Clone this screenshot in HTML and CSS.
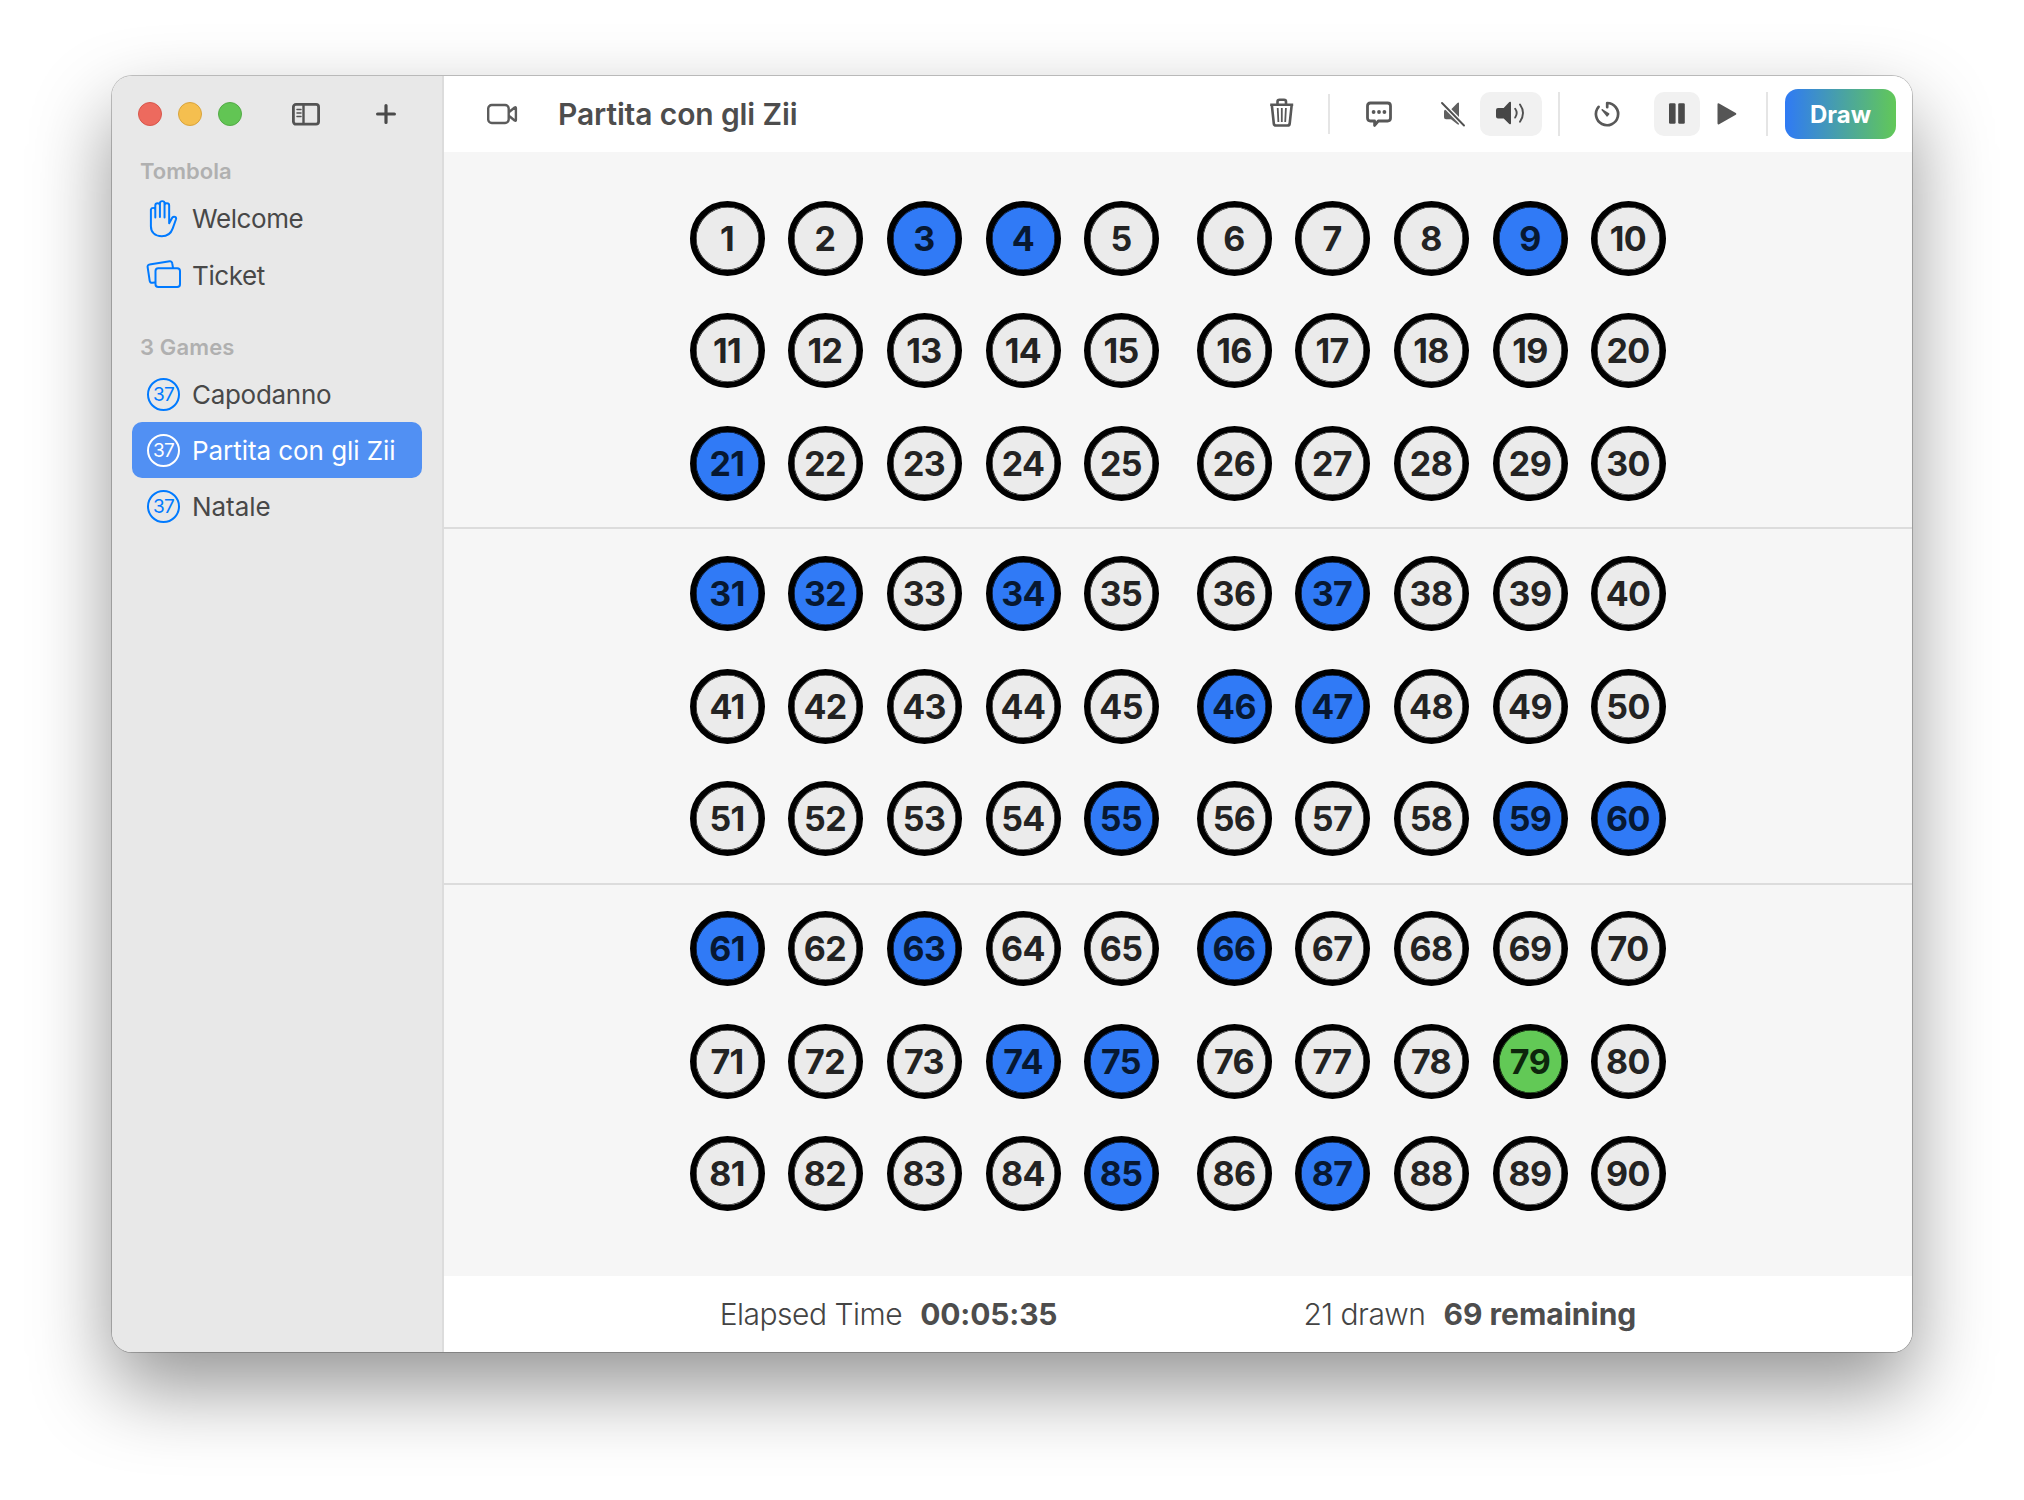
FILE: index.html
```html
<!DOCTYPE html>
<html lang="en">
<head>
<meta charset="utf-8">
<title>Tombola</title>
<link rel="stylesheet" href="styles.css">
</head>
<body>
<div class="window">
  <aside class="sidebar">
    <div class="titlebar">
      <span class="light red"></span><span class="light yellow"></span><span class="light green"></span>
      <svg class="ic-side" width="28" height="23" viewBox="0 0 28 23" fill="none" stroke="#535353"><rect x="1.4" y="1.4" width="25.2" height="19.8" rx="2.6" stroke-width="2.8"/><path d="M11.5 1v20.500" stroke-width="2.400"/><path d="M5 6.500h4M5 10h4M5 13.500h4" stroke-width="1.500" stroke-linecap="round"/></svg>
      <svg class="ic-plus" width="20" height="20" viewBox="0 0 20 20" stroke="#4a4a4a" stroke-width="3.200" stroke-linecap="round"><path d="M10 1.600v16.800M1.600 10h16.800"/></svg>
    </div>
    <h2 class="heading">Tombola</h2>
    <a class="item"><svg class="icon" width="36" height="36" viewBox="0 0 36 36" fill="none" stroke="#007aff" stroke-width="1.900" stroke-linecap="round" stroke-linejoin="round"><path transform="translate(-.3 -1) scale(1.05 1.03)" d="M5.900 20V9.200a2.200 2.200 0 0 1 4.200 0V17M10.100 17V5.400a2.200 2.200 0 0 1 4.400 0V16.500M14.500 16.500V3.300a2.200 2.200 0 0 1 4.400 0V16.500M18.900 17V5.400a2.200 2.200 0 0 1 4.400 0V22.500L26.200 17.200c1.600-2 4.300-.8 3.600 1.500L26.700 27.500C24.800 33 21.200 35.200 16.300 35.200 9.500 35.200 5.900 31 5.900 25.500V19"/></svg><span class="welcome">Welcome</span></a>
    <a class="item"><svg class="icon" width="36" height="36" viewBox="0 0 36 36" fill="none" stroke="#007aff" stroke-width="2" stroke-linecap="round" stroke-linejoin="round"><rect x="10.500" y="11.300" width="24.500" height="18.800" rx="2.800"/><path d="M28 10.800l-.8-4.600a2.200 2.200 0 0 0-2.500-1.900L4.500 7.400a2.200 2.200 0 0 0-1.900 2.500l2.100 14a2.200 2.200 0 0 0 2.500 1.900l2.700-.4"/></svg><span class="ticket">Ticket</span></a>
    <h2 class="heading games">3 Games</h2>
    <a class="item"><span class="badge">37</span><span class="name-tight">Capodanno</span></a>
    <a class="item selected"><span class="badge">37</span><span>Partita con gli Zii</span></a>
    <a class="item"><span class="badge">37</span><span>Natale</span></a>
  </aside>
  <main class="main">
    <header class="toolbar">
      <svg class="ic-video" width="32" height="22" viewBox="0 0 32 22" fill="none" stroke="#5c5c5c" stroke-width="2.400" stroke-linejoin="round"><rect x="2.200" y="2" width="20.500" height="18" rx="3.600"/><path d="M22.800 9.200l5.900-4.700q1.200-.8 1.200.6v11.800q0 1.400-1.200.6L22.800 12.800"/></svg>
      <h1 class="title">Partita con gli Zii</h1>
      <div class="tools">
        <svg class="ic-trash" width="26" height="30" viewBox="0 0 26 30" fill="none" stroke="#585858"><path d="M2.800 6.800L4.800 25.500q.2 2 2.200 2h11.500q2 0 2.200-2L22.700 6.800" stroke-width="2.600"/><path d="M1.200 6.700h23" stroke-width="2.600"/><path d="M8.500 6V3.800q0-2 2-2h4.500q2 0 2 2V6" stroke-width="2.600"/><path d="M8.700 10l.7 14M12.800 10v14M16.900 10l-.7 14" stroke-width="1.800"/></svg>
        <i class="rule short r1"></i>
        <svg class="ic-chat" width="28" height="28" viewBox="0 0 28 28"><path d="M5.400 3h17.200q2.900 0 2.900 2.900v12.200q0 2.900-2.900 2.900H13.300L9.600 25.400V21H5.400q-2.900 0-2.900-2.900V5.900Q2.500 3 5.400 3z" fill="none" stroke="#585858" stroke-width="2.800" stroke-linejoin="round"/><g fill="#585858"><circle cx="8.600" cy="12" r="1.900"/><circle cx="14" cy="12" r="1.900"/><circle cx="19.400" cy="12" r="1.900"/></g></svg>
        <svg class="ic-mute" width="26" height="26" viewBox="0 0 26 26"><path d="M19 2.500v20q0 2-1.600.8L11 18.300H6q-2 0-2-2V10.500q0-2 2-2h5L17.400 1.900Q19 .7 19 2.500z" fill="#606060"/><path d="M2.200 2.200l21.500 22" stroke="#fff" stroke-width="4.600"/><path d="M2 2l22 22.500" stroke="#505050" stroke-width="1.900" stroke-linecap="round"/></svg>
        <span class="toggle sound"><svg width="30" height="24" viewBox="0 0 30 24"><path d="M16 1.800v20.400q0 1.800-1.700.8L8.700 17.600H3q-2 0-2-2V9q0-2 2-2h5.700L14.300 1q1.700-1 1.700.8z" fill="#474747"/><path d="M20.200 7.800q3 4.200 0 8.800M25 3.500q6 8.500 0 17.200" fill="none" stroke="#505050" stroke-width="1.900" stroke-linecap="round"/></svg></span>
        <i class="rule r2"></i>
        <svg class="ic-timer" width="26" height="26" viewBox="0 0 26 26" fill="none" stroke="#585858" stroke-width="2.700" stroke-linecap="round" stroke-linejoin="round"><path d="M13.200 6.200V2a11.100 11.100 0 1 1-8.600 3.900"/><path d="M8.200 8.800L14.600 13l-1.500 1.800z" fill="#585858" stroke-width="1.600"/></svg>
        <span class="toggle pause"><svg width="16" height="22" viewBox="0 0 16 22" fill="#4a4a4a"><rect x="0" y=".2" width="6.600" height="20.600" rx="1.300"/><rect x="9.200" y=".2" width="6.600" height="20.600" rx="1.300"/></svg></span>
        <svg class="ic-play" width="20" height="22" viewBox="0 0 20 22"><path d="M.5 1.500Q.5-.3 2.100.6L18.800 9.900q1.300.9 0 1.800L2.100 21.200Q.5 22 .5 20.300z" fill="#555"/></svg>
        <i class="rule r3"></i>
        <button class="draw">Draw</button>
      </div>
    </header>
    <div class="board">
      <section class="block">
        <div class="row"><b>1</b><b>2</b><b class="hit">3</b><b class="hit">4</b><b>5</b><b>6</b><b>7</b><b>8</b><b class="hit">9</b><b>10</b></div>
        <div class="row"><b>11</b><b>12</b><b>13</b><b>14</b><b>15</b><b>16</b><b>17</b><b>18</b><b>19</b><b>20</b></div>
        <div class="row"><b class="hit">21</b><b>22</b><b>23</b><b>24</b><b>25</b><b>26</b><b>27</b><b>28</b><b>29</b><b>30</b></div>
      </section>
      <section class="block">
        <div class="row"><b class="hit">31</b><b class="hit">32</b><b>33</b><b class="hit">34</b><b>35</b><b>36</b><b class="hit">37</b><b>38</b><b>39</b><b>40</b></div>
        <div class="row"><b>41</b><b>42</b><b>43</b><b>44</b><b>45</b><b class="hit">46</b><b class="hit">47</b><b>48</b><b>49</b><b>50</b></div>
        <div class="row"><b>51</b><b>52</b><b>53</b><b>54</b><b class="hit">55</b><b>56</b><b>57</b><b>58</b><b class="hit">59</b><b class="hit">60</b></div>
      </section>
      <section class="block">
        <div class="row"><b class="hit">61</b><b>62</b><b class="hit">63</b><b>64</b><b>65</b><b class="hit">66</b><b>67</b><b>68</b><b>69</b><b>70</b></div>
        <div class="row"><b>71</b><b>72</b><b>73</b><b class="hit">74</b><b class="hit">75</b><b>76</b><b>77</b><b>78</b><b class="last">79</b><b>80</b></div>
        <div class="row"><b>81</b><b>82</b><b>83</b><b>84</b><b class="hit">85</b><b>86</b><b class="hit">87</b><b>88</b><b>89</b><b>90</b></div>
      </section>
    </div>
    <footer class="status">
      <div class="cell"><span>Elapsed Time</span><strong class="time">00:05:35</strong></div>
      <div class="cell"><span>21 drawn</span><strong>69 remaining</strong></div>
    </footer>
  </main>
</div>
</body>
</html>
```
FILE: styles.css
```css
* { box-sizing: border-box; }
body {
  margin: 0;
  height: 1500px;
  padding: 76px 112px 0;
  background: #fff;
  font-family: Inter, "Liberation Sans", sans-serif;
  overflow: hidden;
}
svg { flex: none; display: block; overflow: visible; }
h1, h2 { margin: 0; }
.window {
  display: flex;
  width: 1800px;
  height: 1276px;
  border-radius: 20px;
  overflow: hidden;
  box-shadow: 0 0 0 1px rgba(0,0,0,.22), 0 36px 80px rgba(0,0,0,.42);
}
.sidebar {
  width: 332px;
  flex: none;
  background: #e8e8e8;
  border-right: 2px solid #dcdcdc;
  padding: 0 20px;
}
.titlebar { display: flex; align-items: center; height: 76px; padding-left: 6px; }
.light { width: 24px; height: 24px; border-radius: 50%; margin-right: 16px; border: 1px solid; }
.red { background: #ed6a5e; border-color: #d8564b; }
.yellow { background: #f5bf4f; border-color: #d9a43c; }
.green { background: #62c554; border-color: #53ab46; }
.ic-side { margin-left: 34px; }
.ic-plus { margin-left: 56px; }
.heading {
  height: 39px;
  padding-left: 8px;
  font-size: 22px;
  line-height: 38px;
  font-weight: 600;
  color: #b0b0b0;
}
.games { height: 63px; line-height: 88px; letter-spacing: .15px; }
.item {
  display: flex;
  align-items: center;
  height: 56px;
  padding-left: 13px;
  border-radius: 10px;
  font-size: 26px;
  letter-spacing: -.06px;
  color: #484848;
}
.icon { margin-right: 11px; }
.welcome { letter-spacing: -.4px; padding-bottom: 2px; }
.ticket { letter-spacing: -.4px; }
.name-tight { letter-spacing: -.3px; }
.badge {
  display: flex;
  align-items: center;
  justify-content: center;
  width: 33px;
  height: 33px;
  margin: 0 12px 0 2px;
  border: 2px solid;
  border-radius: 50%;
  color: #007aff;
  font-size: 19px;
  letter-spacing: -.8px;
}
.selected { background: #5190f3; color: #fff; }
.selected .badge { color: #fff; }
.main { flex: 1; display: flex; flex-direction: column; background: #f6f6f6; }
.toolbar { display: flex; align-items: center; height: 76px; background: #fff; padding: 0 16px 0 42px; }
.title { margin-left: 40px; font-size: 30px; font-weight: 600; color: #4d4d4d; letter-spacing: -.12px; }
.tools { display: flex; align-items: center; margin-left: auto; }
.rule { width: 2px; height: 44px; background: #e5e5e5; }
.short { height: 40px; }
.ic-trash { margin-bottom: 3px; }
.r1 { margin: 0 35px 0 33px; }
.ic-mute { margin: 0 14px 0 47px; }
.toggle { display: flex; align-items: center; justify-content: center; height: 44px; border-radius: 10px; background: #f1f1f1; }
.sound { width: 62px; }
.sound svg { margin: 0 2px 2px 0; }
.r2 { margin: 0 34px 0 16px; }
.pause { width: 46px; margin: 0 17px 0 34px; }
.r3 { margin: 0 17px 0 29px; }
.draw {
  width: 111px;
  height: 50px;
  padding: 0;
  border: 0;
  border-radius: 13px;
  background: linear-gradient(90deg, #2f7af5, #62c858);
  color: #fff;
  font: 700 24px Inter, sans-serif;
}
.board { flex: 1; }
.block { display: flex; flex-direction: column; align-items: center; gap: 37px; padding: 27px 0; }
.block:first-child { padding: 49px 0 26px; }
.block + .block { border-top: 2px solid #dcdcdc; }
.block:last-child { padding-top: 26px; }
.block + .block .row:nth-child(2),
.block:first-child .row:nth-child(3) { margin-top: 1px; }
.row { display: flex; gap: 23px; }
.row b {
  display: flex;
  align-items: center;
  justify-content: center;
  width: 75px;
  height: 75px;
  padding-right: 1px;
  border: 6px solid #000;
  border-radius: 50%;
  box-shadow: inset 0 0 0 .6px #000;
  background: #ebebeb;
  color: #232323;
  font-size: 34px;
  font-weight: 700;
  letter-spacing: -.6px;
}
.row b:nth-child(3), .row b:nth-child(4),
.row b:nth-child(8), .row b:nth-child(9) { margin-left: 1px; }
.row b:nth-child(6) { margin-left: 15px; }
.row .hit { background-color: #307af6; color: #071831; }
.row .last { background-color: #62c956; color: #0d260c; }
.status { display: flex; justify-content: center; gap: 246px; height: 76px; background: #fff; }
.cell { display: flex; align-items: center; font-size: 30px; color: #444; }
.cell span { font-weight: 300; letter-spacing: -.5px; }
.cell strong { margin-left: 18px; font-weight: 700; color: #4d4d4d; }
.cell .time { letter-spacing: -.15px; }
```
